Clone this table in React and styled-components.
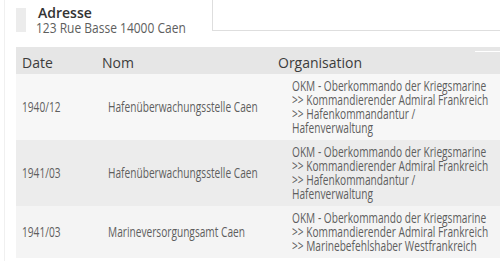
import React from "react";
import styled, { createGlobalStyle } from "styled-components";

const rows = [
  {
    date: "1940/12",
    nom: "Hafenüberwachungsstelle Caen",
    org: [
      "OKM - Oberkommando der Kriegsmarine",
      ">> Kommandierender Admiral Frankreich",
      ">> Hafenkommandantur / Hafenverwaltung",
    ],
    tone: "#f7f7f7",
  },
  {
    date: "1941/03",
    nom: "Hafenüberwachungsstelle Caen",
    org: [
      "OKM - Oberkommando der Kriegsmarine",
      ">> Kommandierender Admiral Frankreich",
      ">> Hafenkommandantur / Hafenverwaltung",
    ],
    tone: "#ececec",
  },
  {
    date: "1941/03",
    nom: "Marineversorgungsamt Caen",
    org: [
      "OKM - Oberkommando der Kriegsmarine",
      ">> Kommandierender Admiral Frankreich",
      ">> Marinebefehlshaber Westfrankreich",
    ],
    tone: "#f4f4f4",
  },
];

const App = () => {
  return (
    <>
      <GlobalStyle />
      <Panel>
        <Top>
          <Marker />
          <AddressBlock>
            <Title>Adresse</Title>
            <Squeeze $scale={0.8} $size={15}>
              123 Rue Basse 14000 Caen
            </Squeeze>
          </AddressBlock>
          <SearchBox />
        </Top>
        <Table>
          <Head>
            <HeadCell>Date</HeadCell>
            <HeadCell>Nom</HeadCell>
            <HeadCell>Organisation</HeadCell>
          </Head>
          {rows.map((r, i) => (
            <Row key={i} $tone={r.tone}>
              <DateCell>
                <Squeeze $nowrap>{r.date}</Squeeze>
              </DateCell>
              <NomCell>
                <Squeeze $nowrap>{r.nom}</Squeeze>
              </NomCell>
              <OrgCell>
                {r.org.map((line, j) => (
                  <Squeeze key={j}>{line}</Squeeze>
                ))}
              </OrgCell>
            </Row>
          ))}
        </Table>
      </Panel>
    </>
  );
};

export default App;

const GlobalStyle = createGlobalStyle`
  html, body {
    margin: 0;
    background: #ffffff;
    overflow: hidden;
  }
  body {
    font-family: "Open Sans", "Liberation Sans", sans-serif;
  }
`;

const Panel = styled.div`
  width: 484px;
  height: 261px;
  margin-left: 4px;
  padding-left: 11px;
  border-left: 1px solid #f0f0f0;
  box-sizing: content-box;
`;

const Top = styled.div`
  display: flex;
  align-items: flex-start;
  height: 47px;
`;

const Marker = styled.div`
  width: 10px;
  height: 24px;
  margin-top: 8px;
  background: #ececec;
`;

const AddressBlock = styled.div`
  display: flex;
  flex-direction: column;
  margin-left: 10px;
  padding-top: 5px;
  width: 150px;
`;

const Title = styled.div`
  font-size: 14px;
  line-height: 15px;
  font-weight: 600;
  color: #333333;
  padding-left: 2px;
`;

const SearchBox = styled.div`
  margin-left: auto;
  width: 288px;
  height: 31px;
  border-left: 1px solid #dedede;
  border-bottom: 1px solid #dedede;
  box-sizing: border-box;
`;

const Table = styled.div`
  display: grid;
  grid-template-columns: 80px 176px 1fr;
`;

const Head = styled.div`
  display: contents;
`;

const HeadCell = styled.div`
  position: relative;
  background: #e6e6e6;
  height: 27px;
  box-sizing: border-box;
  padding: 4px 0 0 6px;
  line-height: 23px;
  font-size: 14px;
  font-weight: 500;
  color: #3c3c3c;
  &:last-child::after {
    content: "";
    position: absolute;
    right: 0;
    top: 4px;
    width: 25px;
    height: 1px;
    background: #ffffff;
  }
`;

const Row = styled.div`
  display: contents;
  & > div {
    background: ${(p) => p.$tone};
  }
`;

const BodyCell = styled.div`
  display: flex;
  flex-direction: column;
  justify-content: center;
  overflow: hidden;
`;

const DateCell = styled(BodyCell)`
  padding-left: 6px;
`;

const NomCell = styled(BodyCell)`
  padding-left: 12px;
`;

const OrgCell = styled(BodyCell)`
  padding: 5px 7px 5px 20px;
`;

const Squeeze = styled.span`
  display: block;
  width: calc(100% / ${(p) => p.$scale || 0.725});
  transform: scaleX(${(p) => p.$scale || 0.725});
  transform-origin: left top;
  font-size: ${(p) => p.$size || 14}px;
  line-height: ${(p) => p.$size || 14}px;
  font-weight: 400;
  white-space: ${(p) => (p.$nowrap ? "nowrap" : "normal")};
  color: #5e5e5e;
`;
